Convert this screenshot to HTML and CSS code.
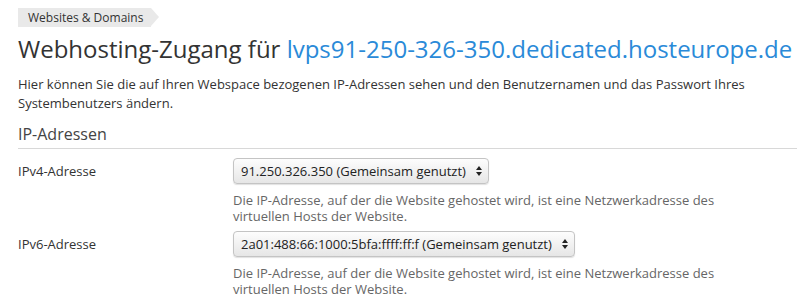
FILE: index.html
```html
<!DOCTYPE html>
<html lang="de">
<head>
    <meta charset="UTF-8">
    <title>Webhosting-Zugang</title>
    <link rel="stylesheet" href="styles.css">
</head>
<body>
    <div class="page">
        <div class="breadcrumbs">
            <a href="#" class="crumb">Websites &amp; Domains</a>
        </div>
        <h1 class="page-title">Webhosting-Zugang für <a href="#">lvps91-250-326-350.dedicated.hosteurope.de</a></h1>
        <p class="intro">Hier können Sie die auf Ihren Webspace bezogenen IP-Adressen sehen und den Benutzernamen und das Passwort Ihres Systembenutzers ändern.</p>

        <fieldset class="section">
            <legend class="section-title">IP-Adressen</legend>

            <div class="form-row">
                <label class="field-label" for="ipv4">IPv4-Adresse</label>
                <div class="field">
                    <div class="select-wrap">
                        <select id="ipv4" name="ipv4">
                            <option>91.250.326.350 (Gemeinsam genutzt)</option>
                        </select>
                    </div>
                    <div class="hint">Die IP-Adresse, auf der die Website gehostet wird, ist eine Netzwerkadresse des virtuellen Hosts der Website.</div>
                </div>
            </div>

            <div class="form-row">
                <label class="field-label" for="ipv6">IPv6-Adresse</label>
                <div class="field">
                    <div class="select-wrap">
                        <select id="ipv6" name="ipv6">
                            <option>2a01:488:66:1000:5bfa:ffff:ff:f (Gemeinsam genutzt)</option>
                        </select>
                    </div>
                    <div class="hint">Die IP-Adresse, auf der die Website gehostet wird, ist eine Netzwerkadresse des virtuellen Hosts der Website.</div>
                </div>
            </div>
        </fieldset>
    </div>
</body>
</html>
```

FILE: styles.css
```css
body {
    margin: 0;
    font-family: "Open Sans", Arial, sans-serif;
    color: #333;
    background: #fff;
}
.page {
    padding: 8px 15px 0 18px;
}
.breadcrumbs {
    display: flex;
    height: 19px;
}
.crumb {
    position: relative;
    display: block;
    padding: 0 8px 0 10px;
    margin-right: 8px;
    background: #e9e9e9;
    color: #333;
    font-size: 12px;
    line-height: 19px;
    text-decoration: none;
}
.crumb::after {
    content: "";
    position: absolute;
    top: 0;
    right: -8px;
    border-top: 9.5px solid transparent;
    border-bottom: 9.5px solid transparent;
    border-left: 8px solid #e9e9e9;
}
.page-title {
    margin: 5px 0 0;
    font-size: 24px;
    font-weight: normal;
    line-height: 34px;
    color: #333;
}
.page-title a {
    color: #2a8ad8;
    text-decoration: none;
}
.intro {
    margin: 9px 0 0;
    font-size: 13px;
    line-height: 19px;
}
.section {
    margin: 10px 0 0;
    padding: 0;
    border: none;
}
.section-title {
    display: block;
    width: 100%;
    padding: 0 0 3px;
    border-bottom: 1px solid #d8d8d8;
    font-size: 16px;
    line-height: 22px;
    color: #444;
}
.form-row {
    display: grid;
    grid-template-columns: 215px 1fr;
    margin-top: 9px;
}
.form-row + .form-row {
    margin-top: 7px;
}
.field-label {
    font-size: 13px;
    line-height: 26px;
}
.select-wrap {
    position: relative;
    display: inline-block;
}
.select-wrap select {
    appearance: none;
    -webkit-appearance: none;
    height: 26px;
    padding: 0 22px 0 7px;
    border: 1px solid #c4c4c4;
    border-radius: 4px;
    background: linear-gradient(#fdfdfd, #e6e6e6);
    box-shadow: 0 1px 1px rgba(0, 0, 0, 0.12);
    font-family: "Open Sans", Arial, sans-serif;
    font-size: 13px;
    color: #222;
}
.select-wrap::before,
.select-wrap::after {
    content: "";
    position: absolute;
    right: 7px;
    border-left: 3px solid transparent;
    border-right: 3px solid transparent;
    pointer-events: none;
}
.select-wrap::before {
    top: 8px;
    border-bottom: 4px solid #222;
}
.select-wrap::after {
    top: 14px;
    border-top: 4px solid #222;
}
.hint {
    margin-top: 8px;
    font-size: 13px;
    line-height: 16px;
    color: #666;
    max-width: 500px;
}
```
